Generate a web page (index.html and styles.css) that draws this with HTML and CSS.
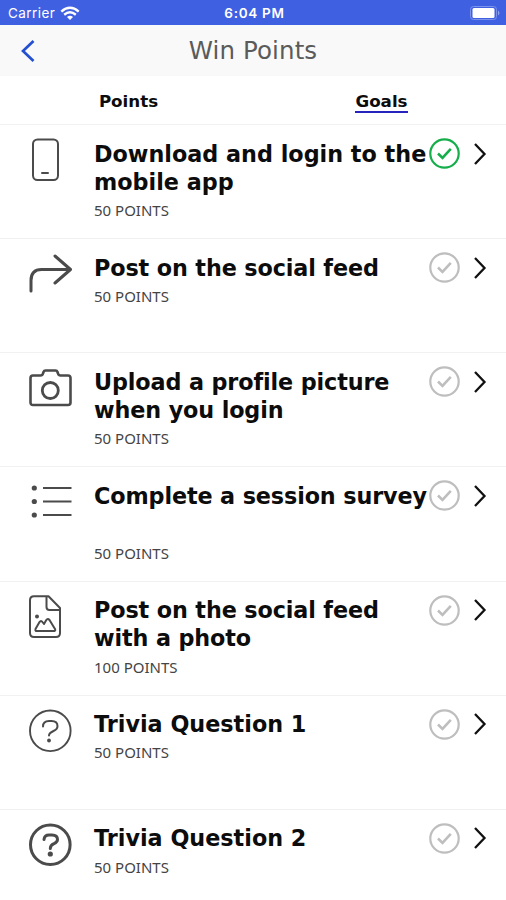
FILE: index.html
```html
<!DOCTYPE html>
<html lang="en">
<head>
<meta charset="utf-8">
<title>Win Points</title>
<link rel="stylesheet" href="styles.css">
</head>
<body>
<svg class="defs" aria-hidden="true">
  <symbol id="check" viewBox="0 0 32 32"><circle cx="15.500" cy="15.500" r="14.200" fill="none" stroke="currentColor" stroke-width="2.200"/><path d="M9 15.500l4.500 4.400 8.300-9" fill="none" stroke="currentColor" stroke-width="2.600"/></symbol>
  <symbol id="chevron" viewBox="0 0 14 24"><path d="M2 2l9.500 10L2 22" fill="none" stroke="currentColor" stroke-width="2.300"/></symbol>
</svg>
<div class="status">
  <div class="carrier">Carrier
    <svg width="20" height="15" viewBox="0 0 20 15" fill="none" stroke="#fff" stroke-width="2.400"><path d="M1.300 5.600Q10-2 18.700 5.600M4.200 8.700Q10 4 15.800 8.700"/><path d="M7 10.900Q10 8.700 13 10.900L10 14z" fill="#fff" stroke="none"/></svg>
  </div>
  <div class="time">6:04 PM</div>
  <svg class="battery" width="31" height="14" viewBox="0 0 31 14"><rect x=".5" y=".5" width="26" height="13" rx="3" fill="none" stroke="#7c93ec"/><rect x="2.500" y="2" width="22" height="10" rx="1.500" fill="#fff"/><path d="M28 4.500q3 2.500 0 5z" fill="#91a4f0"/></svg>
</div>
<header class="nav">
  <svg class="back" width="16" height="24" viewBox="0 0 16 24"><path d="M13.500 2L3 12l10.500 10" fill="none" stroke="#234fd0" stroke-width="2.700"/></svg>
  <h1>Win Points</h1>
</header>
<nav class="tabs"><div class="tab"><span>Points</span></div><div class="tab"><span class="active">Goals</span></div></nav>
<main class="goals">
  <section class="goal">
    <svg class="icon" viewBox="0 0 46 46"><rect x="5" y="1.500" width="25" height="40.500" rx="4.500" stroke-width="2"/><path d="M14 35h6" stroke-width="2"/></svg>
    <div class="text"><h2>Download and login to the mobile app</h2><p>50 POINTS</p></div>
    <svg class="check done"><use href="#check"/></svg><svg class="chevron"><use href="#chevron"/></svg>
  </section>
  <section class="goal">
    <svg class="icon" viewBox="0 0 46 46"><path d="M3 39V28.500Q3 17.500 13.500 17.500H42M27 4l15.500 13.500L27 31" stroke-width="3"/></svg>
    <div class="text tight"><h2>Post on the social feed</h2><p>50 POINTS</p></div>
    <svg class="check"><use href="#check"/></svg><svg class="chevron"><use href="#chevron"/></svg>
  </section>
  <section class="goal">
    <svg class="icon" viewBox="0 0 46 46"><path d="M5 9.500h7.500q2 0 2.500-2l.5-1.500q.5-1.500 2-1.500h10q1.500 0 2 1.500l.5 1.500q.5 2 2.500 2H40q2.500 0 2.500 2.500v24.500q0 2.500-2.500 2.500H5q-2.500 0-2.500-2.500V12Q2.500 9.500 5 9.500z" stroke-width="2.600"/><circle cx="22.300" cy="24.500" r="8" stroke-width="2.800"/></svg>
    <div class="text tight"><h2>Upload a profile picture when you login</h2><p>50 POINTS</p></div>
    <svg class="check"><use href="#check"/></svg><svg class="chevron"><use href="#chevron"/></svg>
  </section>
  <section class="goal">
    <svg class="icon" viewBox="0 0 46 46"><path d="M15 8h28.500M15 21.500h28.500M15 35h28.500" stroke-width="2.200" stroke-linecap="butt"/><g fill="#4b4b4b" stroke="none"><circle cx="6.300" cy="8" r="2.600"/><circle cx="6.300" cy="21.500" r="2.600"/><circle cx="6.300" cy="35" r="2.600"/></g></svg>
    <div class="text tight"><h2>Complete a session survey<br>&nbsp;</h2><p>50 POINTS</p></div>
    <svg class="check"><use href="#check"/></svg><svg class="chevron"><use href="#chevron"/></svg>
  </section>
  <section class="goal">
    <svg class="icon" viewBox="0 0 46 46"><path d="M6 1.200h14.500L32 13v25q0 4-4 4H6q-4 0-4-4V5.200q0-4 4-4zM18.500 1.500V12q0 3 3 3H32M8 36h18.500q1.200-.5.500-2l-5.500-9q-1.800-2.200-3.200 0L16 29l-2-2.500q-1.500-1-2.500.5L7.500 34q-.5 1.500.5 2z" stroke-width="2"/><circle cx="9" cy="21.500" r="2" fill="#4b4b4b" stroke="none"/></svg>
    <div class="text tight"><h2>Post on the social feed with a photo</h2><p>100 POINTS</p></div>
    <svg class="check"><use href="#check"/></svg><svg class="chevron"><use href="#chevron"/></svg>
  </section>
  <section class="goal">
    <svg class="icon" viewBox="0 0 46 46"><circle cx="22.300" cy="21.800" r="20.300" stroke-width="1.900"/><path d="M15 17.500q0-5.500 6-5.500h2.500q6 0 6 5.200 0 3-4 4.800Q21 24 21 26.500" stroke-width="2"/><circle cx="21" cy="31.500" r="1.900" fill="#4b4b4b" stroke="none"/></svg>
    <div class="text"><h2>Trivia Question 1</h2><p>50 POINTS</p></div>
    <svg class="check"><use href="#check"/></svg><svg class="chevron"><use href="#chevron"/></svg>
  </section>
  <section class="goal">
    <svg class="icon" viewBox="0 0 46 46"><circle cx="22.300" cy="21.800" r="19.800" stroke-width="3"/><path d="M16 16.500q.5-4.500 5-4.500h3q5.500 0 5.500 4.500 0 2.500-3.500 4.200-3.700 1.500-3.700 4.800" stroke-width="3"/><circle cx="22.300" cy="31" r="2.600" fill="#4b4b4b" stroke="none"/></svg>
    <div class="text"><h2>Trivia Question 2</h2><p>50 POINTS</p></div>
    <svg class="check"><use href="#check"/></svg><svg class="chevron"><use href="#chevron"/></svg>
  </section>
</main>
</body>
</html>
```
FILE: styles.css
```css
* { box-sizing: border-box; }
body { margin: 0; height: 900px; overflow: hidden; background: #fff; color: #0c0c0c; font-family: "DejaVu Sans", sans-serif; }
h1, h2, p { margin: 0; }
.defs { display: none; }
.status { height: 25px; background: #4060e2; color: #fff; display: grid; grid-template-columns: 1fr auto 1fr; align-items: center; padding: 0 5px 0 8px; font: 13.500px/25px Inter, sans-serif; }
.carrier { display: flex; align-items: center; gap: 5px; letter-spacing: .45px; padding-top: 1px; }
.time { font-weight: 600; padding-top: 1px; letter-spacing: .7px; }
.battery { justify-self: end; }
.nav { height: 51px; background: #f9f9f9; display: grid; grid-template-columns: 40px 1fr 40px; align-items: center; }
.back { margin-left: 20px; }
.nav h1 { text-align: center; color: #5b5b5b; font-size: 24.500px; font-weight: 400; line-height: 52px; letter-spacing: .1px; }
.tabs { height: 48.200px; display: grid; grid-template-columns: 1fr 1fr; padding-top: 15px; }
.tab { text-align: center; font-size: 16.700px; font-weight: 700; line-height: 20px; padding-left: 4px; }
.active { display: inline-block; border-bottom: 2px solid #2724bd; }
.goal { height: 114.100px; border-top: 1.500px solid #f1f1f1; padding-top: 13px; display: grid; grid-template-columns: 66px 335px 32px 14px; align-items: start; padding-left: 28px; }
.icon { width: 46px; height: 46px; fill: none; stroke: #4b4b4b; stroke-linecap: round; stroke-linejoin: round; }
.text h2 { padding-top: 1.500px; font-size: 22.300px; font-weight: 700; line-height: 28.300px; font-variant-ligatures: none; }
.tight h2 { letter-spacing: -.12px; }
.text p { color: #444; font: 15px/20px "Noto Sans", sans-serif; padding-top: 4px; }
.check { width: 32px; height: 32px; color: #bebebe; }
.done { color: #16ae4b; }
.chevron { width: 14px; height: 24px; margin: 3.500px 0 0 12px; color: #111; }
```
